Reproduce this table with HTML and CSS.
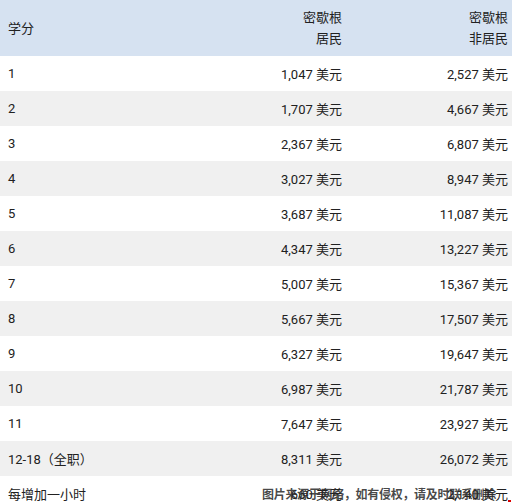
FILE: index.html
```html
<!DOCTYPE html>
<html lang="zh">
<head>
<meta charset="utf-8">
<link rel="stylesheet" href="styles.css">
</head>
<body>
<div class="table">
  <div class="row head">
    <div class="c1">学分</div>
    <div class="c2">密歇根<br>居民</div>
    <div class="c3">密歇根<br>非居民</div>
  </div>
  <div class="row"><div class="c1">1</div><div class="c2">1,047 美元</div><div class="c3">2,527 美元</div></div>
  <div class="row alt"><div class="c1">2</div><div class="c2">1,707 美元</div><div class="c3">4,667 美元</div></div>
  <div class="row"><div class="c1">3</div><div class="c2">2,367 美元</div><div class="c3">6,807 美元</div></div>
  <div class="row alt"><div class="c1">4</div><div class="c2">3,027 美元</div><div class="c3">8,947 美元</div></div>
  <div class="row"><div class="c1">5</div><div class="c2">3,687 美元</div><div class="c3">11,087 美元</div></div>
  <div class="row alt"><div class="c1">6</div><div class="c2">4,347 美元</div><div class="c3">13,227 美元</div></div>
  <div class="row"><div class="c1">7</div><div class="c2">5,007 美元</div><div class="c3">15,367 美元</div></div>
  <div class="row alt"><div class="c1">8</div><div class="c2">5,667 美元</div><div class="c3">17,507 美元</div></div>
  <div class="row"><div class="c1">9</div><div class="c2">6,327 美元</div><div class="c3">19,647 美元</div></div>
  <div class="row alt"><div class="c1">10</div><div class="c2">6,987 美元</div><div class="c3">21,787 美元</div></div>
  <div class="row"><div class="c1">11</div><div class="c2">7,647 美元</div><div class="c3">23,927 美元</div></div>
  <div class="row alt"><div class="c1">12-18（全职）</div><div class="c2">8,311 美元</div><div class="c3">26,072 美元</div></div>
  <div class="row"><div class="c1">每增加一小时</div><div class="c2">660 美元</div><div class="c3">2,140 美元</div></div>
</div>
<div class="watermark">图片来源于网络，如有侵权，请及时联系删除</div>
<div class="corner"></div>
</body>
</html>
```
FILE: styles.css
```css
html, body {
  margin: 0;
  padding: 0;
  background: #fff;
  overflow: hidden;
}
body {
  width: 512px;
  height: 503px;
  position: relative;
  font-family: Roboto, "Noto Sans CJK SC", sans-serif;
  font-size: 13px;
  color: #212121;
}
.table {
  display: flex;
  flex-direction: column;
}
.row {
  display: grid;
  grid-template-columns: 171px 171px 170px;
  height: 35px;
  align-items: center;
}
.row.alt {
  background: #f0f0f0;
}
.row.head {
  height: 56px;
  background: #d6e2f1;
  line-height: 21px;
}
.c1 {
  padding-left: 8px;
}
.c2 {
  text-align: right;
  padding-right: 0;
}
.c3 {
  text-align: right;
  padding-right: 4px;
}
.watermark {
  position: absolute;
  left: 262px;
  top: 488px;
  font-size: 12px;
  font-weight: bold;
  color: rgba(40, 40, 40, 0.85);
  letter-spacing: -0.3px;
  white-space: nowrap;
  line-height: 14px;
}
.corner {
  position: absolute;
  right: 1px;
  bottom: 1px;
  width: 3px;
  height: 2px;
  background: #d00;
}
```
